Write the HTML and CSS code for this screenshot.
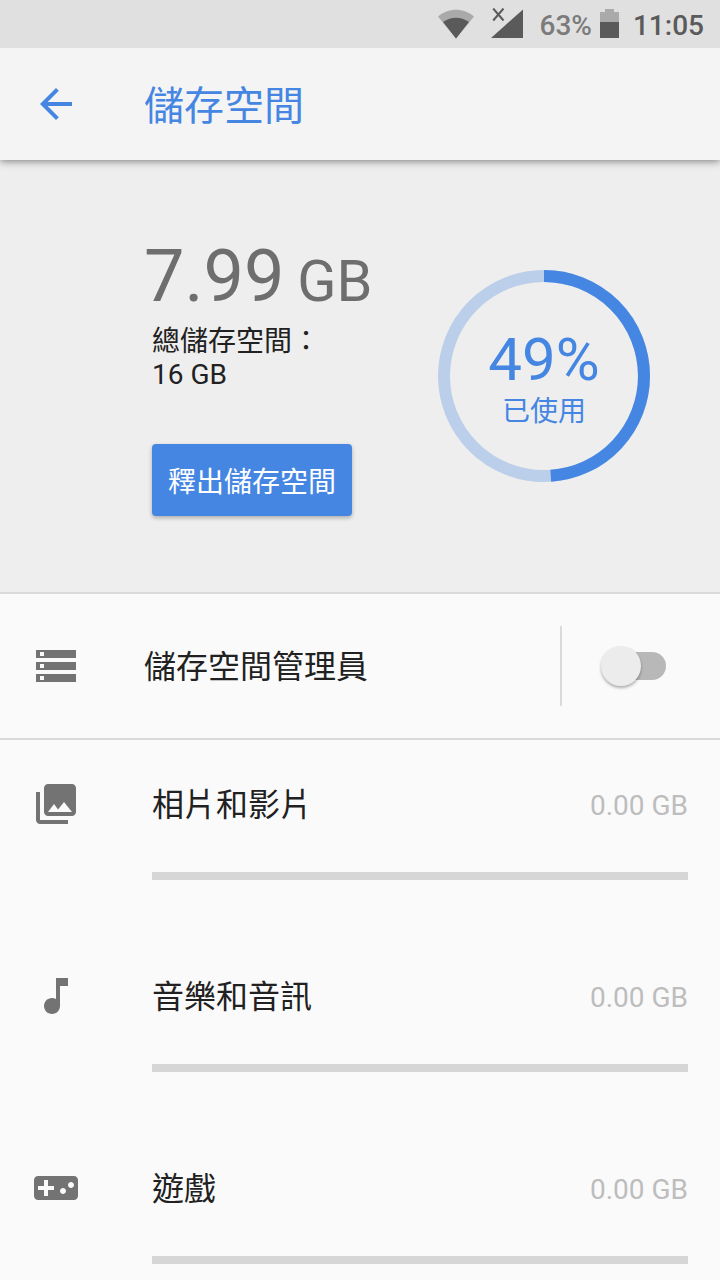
FILE: index.html
```html
<!DOCTYPE html>
<html lang="zh-Hant">
<head>
<meta charset="utf-8">
<title>儲存空間</title>
<link rel="stylesheet" href="styles.css">
</head>
<body>
<div class="screen">
  <div class="status-bar">
    <svg class="wifi" width="36" height="30" viewBox="0 0 36 30">
      <path d="M0 7.500C10-1.500 26-1.500 36 7.500L18 29.500Z" fill="#aaaaaa"/>
      <path d="M5 13C13 7.300 23 7.300 31 13L18 29.500Z" fill="#5a5a5a"/>
    </svg>
    <svg class="signal" width="33" height="32" viewBox="0 0 33 32">
      <path d="M32 1.500V30H0Z" fill="#5a5a5a"/>
      <path d="M2.200 .5L12.500 12.500M12.500 .5L2.200 12.500" stroke="#5a5a5a" stroke-width="2" fill="none"/>
    </svg>
    <span class="battery-level">63%</span>
    <svg class="battery" width="19" height="29" viewBox="0 0 19 29">
      <path d="M5 0H14V3H19V13H0V3H5Z" fill="#aaaaaa"/>
      <path d="M0 13H19V29H0Z" fill="#5a5a5a"/>
    </svg>
    <span class="clock">11:05</span>
  </div>

  <header class="app-bar">
    <svg class="back" width="48" height="48" viewBox="0 0 24 24"><path d="M20 11H7.83l5.59-5.59L12 4l-8 8 8 8 1.41-1.41L7.83 13H20v-2z" fill="#4586e3"/></svg>
    <h1 class="title">儲存空間</h1>
  </header>

  <section class="summary">
    <div class="usage">
      <div class="used"><span class="used-value">7.99</span> <span class="used-unit">GB</span></div>
      <div class="total">總儲存空間：<br>16 GB</div>
      <button class="free-button">釋出儲存空間</button>
    </div>
    <div class="donut">
      <svg class="donut-ring" width="212" height="212" viewBox="0 0 212 212">
        <circle cx="106" cy="106" r="100" fill="none" stroke="#bbceea" stroke-width="12"/>
        <circle cx="106" cy="106" r="100" fill="none" stroke="#4586e3" stroke-width="12" pathLength="100" stroke-dasharray="48.9 100" transform="rotate(-90 106 106)"/>
      </svg>
      <div class="donut-label">
        <div class="percent">49%</div>
        <div class="percent-caption">已使用</div>
      </div>
    </div>
  </section>

  <section class="manager">
    <svg class="icon" width="48" height="48" viewBox="0 0 24 24"><path d="M2 20h20v-4H2v4zm2-3h2v2H4v-2zM2 4v4h20V4H2zm4 3H4V5h2v2zm-4 7h20v-4H2v4zm2-3h2v2H4v-2z" fill="#737373"/></svg>
    <span class="manager-label">儲存空間管理員</span>
    <div class="toggle-area"><div class="track"><div class="thumb"></div></div></div>
  </section>

  <section class="category">
    <div class="category-head">
      <svg class="icon" width="48" height="48" viewBox="0 0 24 24"><path d="M22 16V4c0-1.100-.9-2-2-2H8c-1.100 0-2 .9-2 2v12c0 1.100.9 2 2 2h12c1.100 0 2-.9 2-2zM8 16l3-4 2.030 2.710L16 11l4 5H8zM2 6v14c0 1.100.9 2 2 2h14v-2H4V6H2z" fill="#737373"/></svg>
      <span class="category-name">相片和影片</span>
      <span class="size">0.00 GB</span>
    </div>
    <div class="bar"></div>
  </section>
  <section class="category">
    <div class="category-head">
      <svg class="icon" width="48" height="48" viewBox="0 0 24 24"><path d="M12 3v10.550c-.59-.34-1.270-.55-2-.55-2.210 0-4 1.790-4 4s1.790 4 4 4 4-1.790 4-4V7h4V3h-6z" fill="#737373"/></svg>
      <span class="category-name">音樂和音訊</span>
      <span class="size">0.00 GB</span>
    </div>
    <div class="bar"></div>
  </section>
  <section class="category">
    <div class="category-head">
      <svg class="icon" width="48" height="48" viewBox="0 0 24 24"><path d="M21 6H3c-1.100 0-2 .9-2 2v8c0 1.100.9 2 2 2h18c1.100 0 2-.9 2-2V8c0-1.100-.9-2-2-2zm-10 7H8v3H6v-3H3v-2h3V8h2v3h3v2zm4.500 2c-.83 0-1.500-.67-1.500-1.500s.67-1.500 1.500-1.500 1.500.67 1.500 1.500-.67 1.500-1.500 1.500zm4-3c-.83 0-1.500-.67-1.500-1.500S18.670 9 19.500 9s1.500.67 1.500 1.500-.67 1.500-1.500 1.500z" fill="#737373"/></svg>
      <span class="category-name">遊戲</span>
      <span class="size">0.00 GB</span>
    </div>
    <div class="bar"></div>
  </section>
</div>
</body>
</html>
```
FILE: styles.css
```css
* { box-sizing: border-box; }
body { margin: 0; font-family: Roboto, "Noto Sans CJK TC", sans-serif; color: #212121; }
.screen { width: 720px; height: 1280px; overflow: hidden; background: #fafafa; display: flex; flex-direction: column; }
.screen > * { flex-shrink: 0; }

.status-bar { height: 48px; background: #e0e0e0; display: flex; align-items: flex-start; justify-content: flex-end; padding-right: 16px; font-size: 28px; font-weight: 500; line-height: 32px; }
.wifi { margin: 9px 17px 0 0; }
.signal { margin: 8px 16px 0 0; }
.battery-level { color: #7b7b7b; padding-top: 10px; margin-right: 8px; }
.battery { margin: 9px 14px 0 0; }
.clock { color: #5a5a5a; padding-top: 10px; }

.app-bar { height: 112px; background: #f4f4f4; display: flex; align-items: center; padding-left: 32px; gap: 64px; box-shadow: 0 1px 8px rgba(0,0,0,.5); clip-path: inset(0 0 -12px 0); z-index: 1; }
.title { margin: 0; padding-top: 6px; font-size: 40px; font-weight: 400; line-height: 56px; color: #4586e3; }

.summary { height: 434px; background: #eee; border-bottom: 2px solid #dadada; display: flex; justify-content: space-between; padding: 0 70px 0 144px; }
.usage { padding-top: 75px; }
.used { height: 84px; color: #6e6e6e; font-size: 57.6px; line-height: 84px; white-space: nowrap; word-spacing: -1.5px; }
.used-value { font-size: 72px; }
.total { font-size: 28px; line-height: 33px; padding: 6px 0 0 8px; }
.free-button { display: block; margin: 53px 0 0 8px; width: 200px; height: 72px; border: 0; border-radius: 4px; padding: 0; background: #4586e3; color: #fff; font: inherit; font-size: 28px; box-shadow: 0 2px 4px rgba(0,0,0,.28); }
.donut { position: relative; width: 212px; height: 212px; margin-top: 110px; color: #4586e3; text-align: center; }
.donut-ring { display: block; }
.donut-label { position: absolute; inset: 0; padding-top: 55px; }
.percent { font-size: 60px; line-height: 70px; }
.percent-caption { padding-top: 1px; font-size: 28px; line-height: 32px; }

.manager { height: 146px; border-bottom: 2px solid #dadada; display: flex; align-items: center; padding-left: 32px; }
.icon { display: block; flex: none; }
.manager-label { margin-left: 64px; padding-bottom: 4px; flex: 1; font-size: 32px; }
.toggle-area { width: 160px; height: 80px; border-left: 2px solid #dadada; display: flex; align-items: center; padding-left: 44px; }
.track { width: 60px; height: 28px; border-radius: 14px; background: #b8b8b8; display: flex; align-items: center; }
.thumb { flex: none; width: 40px; height: 40px; margin-left: -5px; border-radius: 50%; background: #ececec; box-shadow: 0 2px 3px rgba(0,0,0,.3); }

.category { height: 192px; }
.category-head { height: 128px; display: flex; align-items: center; padding: 0 32px; }
.category-name { margin-left: 72px; padding-bottom: 4px; flex: 1; font-size: 32px; }
.size { padding-top: 2px; font-size: 28px; color: #bdbdbd; }
.bar { height: 8px; margin: 4px 32px 0 152px; background: #d6d6d6; }
```
